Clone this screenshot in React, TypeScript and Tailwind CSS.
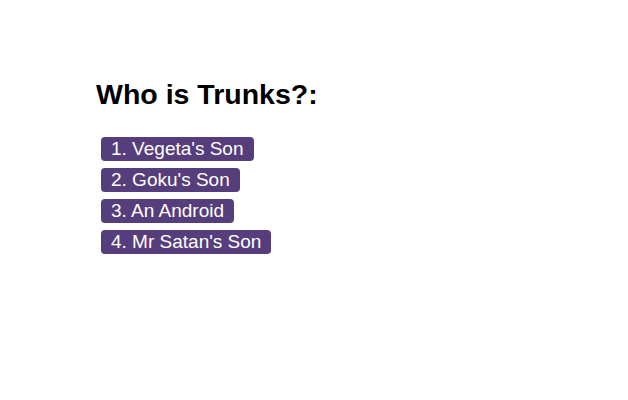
const answers = ["1. Vegeta's Son", "2. Goku's Son", '3. An Android', "4. Mr Satan's Son"];

export default function App() {
  return (
    <div className="min-h-[400px] w-full bg-white pl-[96px] pt-[79px] font-['Liberation_Sans',Arial,sans-serif]">
      <h2 className="text-[28.5px] font-bold leading-[31px] text-black">Who is Trunks?:</h2>
      <ul className="mt-[27px] flex flex-col items-start gap-[7px] pl-[5px]">
        {answers.map((a) => (
          <li key={a} className="flex">
            <button className="block h-6 rounded bg-[#563d7c] px-[10px] text-[19px] leading-6 text-white">
              {a}
            </button>
          </li>
        ))}
      </ul>
    </div>
  );
}
